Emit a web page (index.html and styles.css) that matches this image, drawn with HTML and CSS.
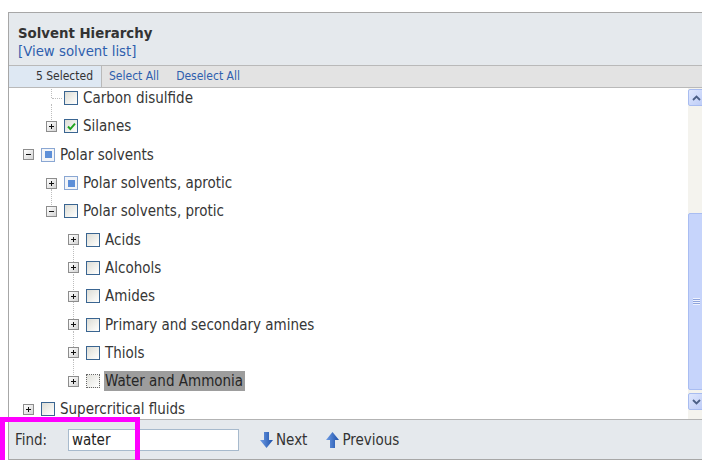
FILE: index.html
```html
<!DOCTYPE html>
<html lang="en">
<head>
<meta charset="utf-8">
<title>Solvent Hierarchy</title>
<link rel="stylesheet" href="styles.css">
</head>
<body>
<div class="panel">
  <div class="panel-head">
    <div class="panel-title">Solvent Hierarchy</div>
    <a class="panel-link" href="#">[View solvent list]</a>
  </div>
  <div class="toolbar">
    <div class="sel-count">5 Selected</div>
    <a class="tool-link" href="#">Select All</a>
    <a class="tool-link" href="#">Deselect All</a>
  </div>
  <div class="tree">
    <div class="tree-list">
      <div class="row lv1 next">
        <span class="elbow"></span>
        <span class="cb"></span>
        <span class="label">Carbon disulfide</span>
      </div>
      <div class="row lv1">
        <span class="exp plus"></span>
        <span class="cb checked"><svg viewBox="0 0 11 11" width="11" height="11"><path d="M2 5.5 L4.3 8 L9 2.6" fill="none" stroke="#1fa31f" stroke-width="1.9"/></svg></span>
        <span class="label">Silanes</span>
      </div>
      <div class="row lv0">
        <span class="exp minus"></span>
        <span class="cb partial"></span>
        <span class="label">Polar solvents</span>
      </div>
      <div class="row lv1 next">
        <span class="exp plus"></span>
        <span class="cb partial"></span>
        <span class="label">Polar solvents, aprotic</span>
      </div>
      <div class="row lv1">
        <span class="exp minus"></span>
        <span class="cb"></span>
        <span class="label">Polar solvents, protic</span>
      </div>
      <div class="row lv2 next">
        <span class="exp plus"></span>
        <span class="cb"></span>
        <span class="label">Acids</span>
      </div>
      <div class="row lv2 next">
        <span class="exp plus"></span>
        <span class="cb"></span>
        <span class="label">Alcohols</span>
      </div>
      <div class="row lv2 next">
        <span class="exp plus"></span>
        <span class="cb"></span>
        <span class="label">Amides</span>
      </div>
      <div class="row lv2 next">
        <span class="exp plus"></span>
        <span class="cb"></span>
        <span class="label">Primary and secondary amines</span>
      </div>
      <div class="row lv2 next">
        <span class="exp plus"></span>
        <span class="cb"></span>
        <span class="label">Thiols</span>
      </div>
      <div class="row lv2">
        <span class="exp plus"></span>
        <span class="cb focus"></span>
        <span class="label selected">Water and Ammonia</span>
      </div>
      <div class="row lv0">
        <span class="exp plus"></span>
        <span class="cb"></span>
        <span class="label">Supercritical fluids</span>
      </div>
    </div>
    <div class="scrollbar">
      <div class="sb-btn"><svg viewBox="0 0 9 6" width="9" height="6"><path d="M1 5 L4.5 1.5 L8 5" fill="none" stroke="#4b5f86" stroke-width="1.8"/></svg></div>
      <div class="sb-track">
        <div class="sb-thumb"><span class="grip"></span></div>
      </div>
      <div class="sb-btn"><svg viewBox="0 0 9 6" width="9" height="6"><path d="M1 1 L4.5 4.5 L8 1" fill="none" stroke="#4b5f86" stroke-width="1.8"/></svg></div>
    </div>
  </div>
  <div class="findbar">
    <label class="find-label" for="find">Find:</label>
    <input class="find-input" id="find" type="text" value="water">
    <a class="find-btn next-btn" href="#"><svg viewBox="0 0 13 16" width="13" height="16"><defs><linearGradient id="ga" x1="0" x2="1" y1="0" y2="0"><stop offset="0" stop-color="#6f9de6"/><stop offset="1" stop-color="#1c4fa8"/></linearGradient></defs><path d="M4 0 H9 V8 H13 L6.5 16 L0 8 H4 Z" fill="url(#ga)"/></svg>Next</a>
    <a class="find-btn prev-btn" href="#"><svg viewBox="0 0 13 16" width="13" height="16"><defs><linearGradient id="gb" x1="0" x2="1" y1="0" y2="0"><stop offset="0" stop-color="#6f9de6"/><stop offset="1" stop-color="#1c4fa8"/></linearGradient></defs><path d="M4 16 H9 V8 H13 L6.5 0 L0 8 H4 Z" fill="url(#gb)"/></svg>Previous</a>
  </div>
</div>
<div class="hilite-box"></div>
</body>
</html>
```

FILE: styles.css
```css
html, body {
  margin: 0;
  padding: 0;
  background: #ffffff;
  overflow: hidden;
  width: 702px;
  height: 460px;
}

body {
  font-family: "DejaVu Sans Condensed", "DejaVu Sans", sans-serif;
  color: #333333;
  position: relative;
}

.panel {
  margin: 12px 0 0 8px;
  width: 700px;
  border: 1px solid #a7a7a7;
  display: flex;
  flex-direction: column;
}

/* header */
.panel-head {
  background: #e5e9ed;
  padding: 11px 9px 5px;
  display: flex;
  flex-direction: column;
}

.panel-title {
  font-weight: bold;
  font-size: 14.8px;
  line-height: 18px;
  color: #333333;
}

.panel-link {
  font-size: 14.8px;
  line-height: 18px;
  color: #2f5fae;
  text-decoration: none;
}

/* toolbar */
.toolbar {
  display: flex;
  align-items: stretch;
  height: 21px;
  background: #e3e3e3;
  border-top: 1px solid #b9b9b9;
  border-bottom: 1px solid #b9b9b9;
  font-size: 12px;
}

.sel-count {
  width: 84px;
  padding-right: 8px;
  text-align: right;
  line-height: 21px;
  background: #dee8f3;
  border-right: 1px solid #b9b9b9;
  color: #333;
}

.tool-link {
  line-height: 21px;
  color: #2f5fae;
  text-decoration: none;
  margin-left: 7px;
  margin-right: 10px;
}

/* tree */
.tree {
  height: 331px;
  display: flex;
  background: #ffffff;
  overflow: hidden;
}

.tree-list {
  flex: 1;
  margin-top: -4px;
}

.row {
  position: relative;
  height: 28.3px;
  display: flex;
  align-items: center;
  font-size: 15px;
  color: #363636;
}

.row.lv0 { padding-left: 14px; }
.row.lv1 { padding-left: 37px; }
.row.lv2 { padding-left: 59px; }

/* dotted connector to the next sibling */
.row.next::after {
  content: "";
  position: absolute;
  top: calc(50% + 6px);
  height: calc(100% - 12px);
  border-left: 1px dotted #bdbdbd;
}
.row.lv1.next::after { left: 42px; }
.row.lv2.next::after { left: 64px; }

.exp {
  width: 9px;
  height: 9px;
  border: 1px solid #8d8d8d;
  background: linear-gradient(135deg, #ffffff, #d4d4d4);
  margin-right: 7px;
  position: relative;
  flex: none;
}

.exp::before {
  content: "";
  position: absolute;
  left: 2px;
  top: 4px;
  width: 5px;
  height: 1px;
  background: #111;
}

.exp.plus::after {
  content: "";
  position: absolute;
  left: 4px;
  top: 2px;
  width: 1px;
  height: 5px;
  background: #111;
}

.elbow {
  width: 11px;
  height: 100%;
  margin-right: 7px;
  flex: none;
  position: relative;
}

.elbow::before {
  content: "";
  position: absolute;
  left: 5px;
  top: 0;
  height: 50%;
  border-left: 1px dotted #bdbdbd;
}

.elbow::after {
  content: "";
  position: absolute;
  left: 6px;
  top: 50%;
  width: 10px;
  border-top: 1px dotted #bdbdbd;
}

.cb {
  width: 12px;
  height: 12px;
  border: 1px solid #3a6591;
  background: linear-gradient(135deg, #dcdcd5 0%, #f2f2ee 60%, #ffffff 100%);
  margin-right: 5px;
  flex: none;
  display: flex;
  align-items: center;
  justify-content: center;
}

.cb.partial {
  border-color: #8aa7d3;
  background: #f3f5f8;
}

.cb.partial::before {
  content: "";
  width: 7px;
  height: 7px;
  background: #5d8fd8;
}

.cb.focus {
  border: 1px dotted #666;
  background: linear-gradient(135deg, #e2e2dc, #ffffff);
}

.label {
  white-space: nowrap;
  line-height: 20px;
}

.label.selected {
  background: #9d9d9d;
  color: #262626;
  padding: 0 2px 0 1px;
  margin-left: -1px;
}

/* scrollbar */
.scrollbar {
  width: 17px;
  margin-right: 4px;
  display: flex;
  flex-direction: column;
  background: #f4f3ee;
  padding-top: 1px;
  padding-bottom: 9px;
}

.sb-btn {
  height: 15px;
  background: linear-gradient(135deg, #dfe7fd, #bccbf7);
  border: 1px solid #a8bcf0;
  border-radius: 2px;
  display: flex;
  align-items: center;
  justify-content: center;
  flex: none;
}

.sb-track {
  flex: 1;
  display: flex;
  flex-direction: column;
  justify-content: flex-end;
  padding-bottom: 3px;
}

.sb-thumb {
  height: 175px;
  background: #c6d4fb;
  border: 1px solid #a9bdf2;
  border-radius: 2px;
  display: flex;
  align-items: center;
  justify-content: center;
}

.grip {
  width: 7px;
  height: 7px;
  background: repeating-linear-gradient(#eef2fe 0 1px, #8ea4dc 1px 2px);
}

/* find bar */
.findbar {
  height: 39px;
  background: #e5e9ed;
  border-top: 1px solid #b3b3b3;
  display: flex;
  align-items: center;
  font-size: 15px;
  color: #333;
}

.find-label {
  margin-left: 6px;
  width: 34px;
}

.find-input {
  margin-left: 19px;
  width: 163px;
  height: 20px;
  border: 1px solid #a7bacd;
  padding: 0 3px;
  font-family: inherit;
  font-size: 15px;
  color: #222;
  background: #fff;
  outline: none;
}

.find-btn {
  display: flex;
  align-items: center;
  gap: 3px;
  color: #333;
  text-decoration: none;
}

.next-btn { margin-left: 21px; }
.prev-btn { margin-left: 19px; }

/* annotation frame drawn over the find field */
.hilite-box {
  position: absolute;
  left: 0;
  top: 417px;
  width: 130px;
  height: 50px;
  border: 5px solid #ff00ff;
}
```
